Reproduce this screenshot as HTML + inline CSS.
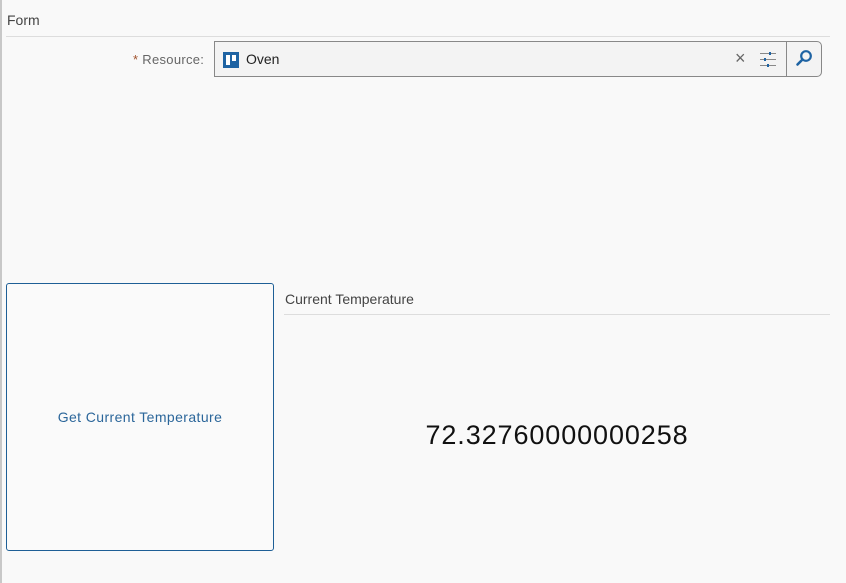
<!DOCTYPE html>
<html><head><style>
body{margin:0;width:846px;height:583px;background:#f9f9f9;font-family:"Liberation Sans",sans-serif;position:relative;overflow:hidden}
.lb{position:absolute;left:0;top:0;width:2px;height:583px;background:#c8c8c8}
.t{position:absolute;font-size:13px;color:#444;white-space:nowrap}
.hr{position:absolute;height:1px;background:#ddd}
</style></head><body>
<div class="lb"></div>
<div class="t" style="left:7px;top:12px;font-size:14px">Form</div>
<div class="hr" style="left:6px;top:36px;width:824px"></div>
<div class="t" style="left:133px;top:52px;color:#666;font-size:13px;letter-spacing:0.3px"><span style="color:#a0522d">*</span> Resource:</div>
<div style="position:absolute;left:214px;top:41px;width:606px;height:34px;border:1px solid #888;border-radius:0 5px 5px 0;background:#f3f3f3"></div>
<div style="position:absolute;left:223px;top:52px;width:16px;height:16px;background:#1e63a3"><div style="position:absolute;left:3px;top:3px;width:4px;height:10px;background:#fff"></div><div style="position:absolute;left:9px;top:3px;width:4px;height:6px;background:#fff"></div></div>
<div class="t" style="left:246px;top:51px;color:#222;font-size:14px">Oven</div>
<div style="position:absolute;left:735px;top:48px;font-size:18px;color:#666">×</div>
<svg style="position:absolute;left:759px;top:50px" width="18" height="18" viewBox="0 0 18 18"><g stroke="#888" stroke-width="1"><line x1="1" y1="3.5" x2="17" y2="3.5"/><line x1="1" y1="9.5" x2="17" y2="9.5"/><line x1="1" y1="15.5" x2="17" y2="15.5"/></g><g stroke="#1e63a3" stroke-width="2"><line x1="11" y1="2" x2="11" y2="5"/><line x1="6" y1="8" x2="6" y2="11"/><line x1="9" y1="14" x2="9" y2="17"/></g></svg>
<div style="position:absolute;left:786px;top:42px;width:1px;height:34px;background:#888"></div>
<svg style="position:absolute;left:795px;top:49px" width="18" height="18" viewBox="0 0 18 18"><circle cx="11" cy="7" r="4.8" fill="none" stroke="#1e63a3" stroke-width="2.2"/><line x1="7.5" y1="10.5" x2="2.5" y2="15.5" stroke="#1e63a3" stroke-width="2.6" stroke-linecap="round"/></svg>
<div style="position:absolute;left:6px;top:283px;width:266px;height:266px;border:1px solid #1e5f96;border-radius:3px;background:#fafafa"></div>
<div class="t" style="left:6px;width:268px;text-align:center;top:409px;color:#2b669a;font-size:14px;letter-spacing:0.4px">Get Current Temperature</div>
<div class="t" style="left:285px;top:291px;font-size:14px">Current Temperature</div>
<div class="hr" style="left:284px;top:314px;width:546px"></div>
<div class="t" style="left:284px;width:546px;text-align:center;top:420px;font-size:27px;letter-spacing:0.9px;color:#111">72.32760000000258</div>
</body></html>
